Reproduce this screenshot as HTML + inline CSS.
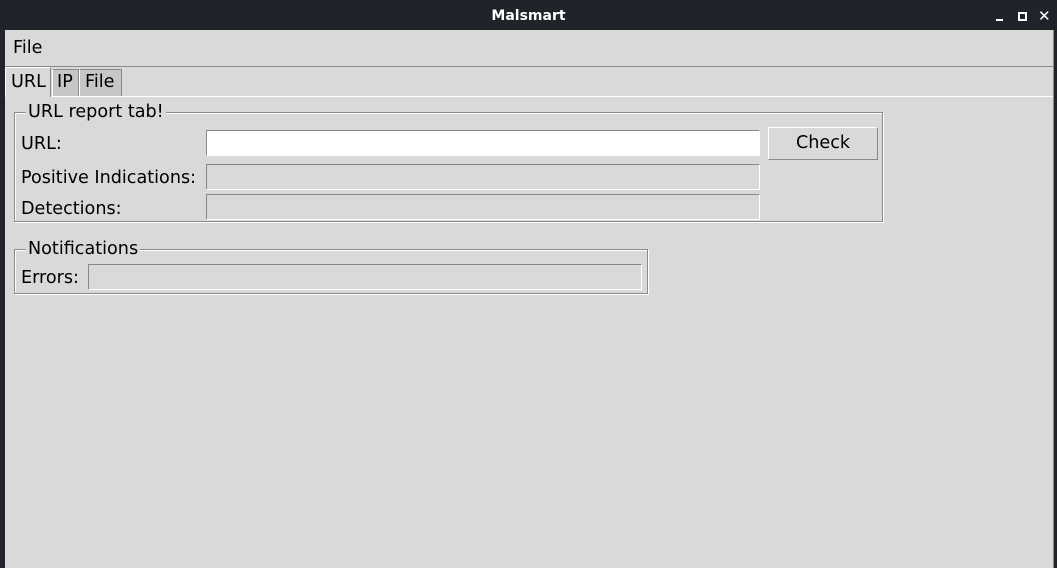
<!DOCTYPE html><html><head><style>
body{margin:0;width:1057px;height:568px;background:#21232b;position:relative;overflow:hidden;font-family:"DejaVu Sans","Liberation Sans",sans-serif;font-size:17.6px;color:#000}
.a{position:absolute}
.t{color:#fff;font-size:14px;font-weight:bold}
.win{left:5px;top:30px;width:1049px;height:538px;background:#d9d9d9}
.g{border:1px solid #8a8a8a;box-shadow:inset 1px 1px 0 #fff,1px 1px 0 #fff}
.lbl{background:#d9d9d9;padding:0 2px;line-height:18px}
.e{border:1px solid #888;border-right-color:#fff;border-bottom-color:#fff;box-sizing:border-box;background:#d9d9d9}
</style></head><body>
<div class="a t" style="left:0;width:1057px;top:8px;text-align:center">Malsmart</div>
<div class="a" style="left:996px;top:19px;width:7px;height:2px;background:#fff"></div>
<div class="a" style="left:1018px;top:12px;width:5px;height:5px;border:2px solid #fff"></div>
<div class="a t" style="left:1038px;top:7px;font-size:15px">✕</div>
<div class="a win"></div>
<div class="a" style="left:13px;top:38px">File</div>
<div class="a" style="left:5px;top:66px;width:1049px;height:1px;background:#8a8a8a"></div>
<div class="a" style="left:5px;top:96px;width:1049px;height:1px;background:#fff"></div>
<div class="a" style="left:1053px;top:30px;width:1px;height:538px;background:#8a8a8a"></div>
<div class="a" style="left:5px;top:67px;width:46px;height:30px;background:#d9d9d9;border-left:1px solid #fff;border-right:1px solid #8a8a8a;border-top:1px solid #fff;box-sizing:border-box"></div>
<div class="a" style="left:11px;top:72px">URL</div>
<div class="a" style="left:52px;top:69px;width:27px;height:27px;background:#c6c6c6;border:1px solid #8a8a8a;border-bottom:none;box-sizing:border-box;border-left-color:#fff"></div>
<div class="a" style="left:57px;top:72px">IP</div>
<div class="a" style="left:79px;top:69px;width:43px;height:27px;background:#c6c6c6;border:1px solid #8a8a8a;border-bottom:none;box-sizing:border-box;border-left-color:#fff"></div>
<div class="a" style="left:85px;top:72px">File</div>
<div class="a g" style="left:14px;top:112px;width:867px;height:108px"></div>
<div class="a lbl" style="left:26px;top:103px">URL report tab!</div>
<div class="a" style="left:21px;top:134px">URL:</div>
<div class="a" style="left:21px;top:168px">Positive Indications:</div>
<div class="a" style="left:21px;top:199px">Detections:</div>
<div class="a e" style="left:206px;top:130px;width:554px;height:26px;background:#fff"></div>
<div class="a e" style="left:206px;top:164px;width:554px;height:26px"></div>
<div class="a e" style="left:206px;top:194px;width:554px;height:26px"></div>
<div class="a" style="left:768px;top:127px;width:110px;height:33px;box-sizing:border-box;border:1px solid #8a8a8a;border-left-color:#fff;border-top-color:#fff;text-align:center;line-height:31px">Check</div>
<div class="a g" style="left:14px;top:249px;width:632px;height:43px"></div>
<div class="a lbl" style="left:26px;top:240px">Notifications</div>
<div class="a" style="left:21px;top:268px">Errors:</div>
<div class="a e" style="left:88px;top:264px;width:554px;height:26px"></div>
</body></html>
